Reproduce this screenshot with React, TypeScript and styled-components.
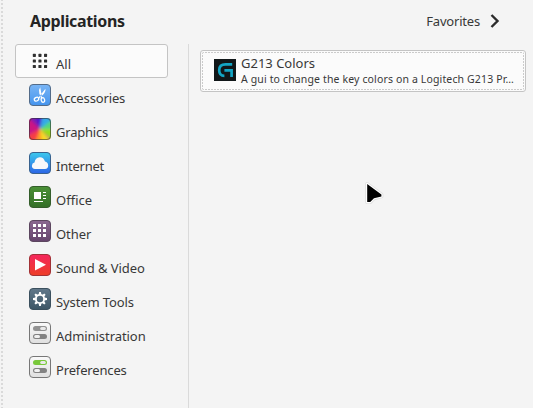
import React from "react";
import styled, { createGlobalStyle } from "styled-components";

const GlobalStyle = createGlobalStyle`
  * { box-sizing: border-box; }
  html, body { margin: 0; background: #f4f4f4; overflow: hidden; }
`;

const Menu = styled.main`
  position: relative;
  width: 533px;
  height: 408px;
  display: flex;
  overflow: hidden;
  background: #f4f4f4;
  color: #383838;
  font: 13px/18px "Noto Sans", "Open Sans", sans-serif;
`;

const ResizeEdge = styled.div`
  width: 2px;
  margin-left: 1px;
  background: repeating-linear-gradient(to bottom, #dadada 0 1px, transparent 1px 3px, #dadada 3px 4px);
`;

const Content = styled.div`
  flex: 1;
  display: flex;
  flex-direction: column;
`;

const Header = styled.header`
  display: flex;
  justify-content: space-between;
  height: 44px;
  padding: 11px 33px 0 27px;
`;

const Label = styled.span<{ $spacing?: number }>`
  display: block;
  white-space: nowrap;
  letter-spacing: ${(p) => p.$spacing ?? 0}px;
`;

const Title = styled(Label)`
  font-size: 16px;
  line-height: 20px;
  font-weight: 700;
  color: #242424;
`;

const Favorites = styled.div`
  display: flex;
  align-items: flex-start;
  gap: 10px;
  padding-top: 1px;
`;

const Columns = styled.div`
  display: flex;
  flex: 1;
`;

const Sidebar = styled.nav`
  width: 186px;
  padding-left: 12px;
  border-right: 1px solid #dadada;
`;

const Category = styled.div<{ $active?: boolean }>`
  display: flex;
  align-items: flex-start;
  width: 153px;
  height: 34px;
  gap: 5px;
  padding: 5px 0 0 13px;
  border: 1px solid ${(p) => (p.$active ? "#c4c4c4" : "transparent")};
  border-radius: 3px;
  background: ${(p) => (p.$active ? "#fbfbfb" : "transparent")};

  svg { flex: none; display: block; }
  ${Label} { margin-top: 5px; }
`;

const Results = styled.section`
  padding: 6px 0 0 11px;
`;

const ResultCard = styled.div`
  width: 326px;
  height: 42px;
  padding: 1px;
  border: 1px solid #c4c4c4;
  border-radius: 3px;
  background: #fbfbfb;
`;

const FocusRing = styled.div`
  display: flex;
  gap: 5px;
  height: 100%;
  padding: 7px 0 0 12px;
  border-radius: 2px;
  background:
    repeating-linear-gradient(to right, #cbcbcb 0 2px, transparent 2px 3px) top / 100% 1px no-repeat,
    repeating-linear-gradient(to right, #cbcbcb 0 2px, transparent 2px 3px) bottom / 100% 1px no-repeat,
    repeating-linear-gradient(to bottom, #cbcbcb 0 2px, transparent 2px 3px) left / 1px 100% no-repeat,
    repeating-linear-gradient(to bottom, #cbcbcb 0 2px, transparent 2px 3px) right / 1px 100% no-repeat;
`;

const ResultText = styled.div`
  margin-top: -4px;
`;

const AppName = styled(Label)`
  line-height: 17px;
`;

const Description = styled(Label)`
  font-size: 10.5px;
  line-height: 14px;
`;

const Pointer = styled.svg`
  position: absolute;
  left: 364px;
  top: 180px;
`;

type TileProps = { id: string; from: string; to: string; stroke: string; children?: React.ReactNode };

const Tile = ({ id, from, to, stroke, children }: TileProps) => (
  <svg width="22" height="22" viewBox="0 0 22 22">
    <defs>
      <linearGradient id={id} x1="0" y1="0" x2="0" y2="1">
        <stop stopColor={from} />
        <stop offset="1" stopColor={to} />
      </linearGradient>
    </defs>
    <rect x=".5" y=".5" width="21" height="21" rx="3.5" fill={`url(#${id})`} stroke={stroke} />
    {children}
  </svg>
);

const grid = [0, 1, 2].flatMap((y) => [0, 1, 2].map((x) => [x, y]));

const AllIcon = () => (
  <svg width="22" height="22" viewBox="0 0 22 22" fill="#303030">
    {grid.map(([x, y]) => (
      <rect key={`${x}${y}`} x={3.8 + x * 5.6} y={3.8 + y * 5.6} width="3.1" height="3.1" rx=".6" />
    ))}
  </svg>
);

const AccessoriesIcon = () => (
  <Tile id="accessories" from="#79b5f5" to="#4594ed" stroke="#536b88">
    <g fill="none" stroke="#fff" strokeWidth="1.2">
      <ellipse cx="7.5" cy="15.2" rx="2.3" ry="1.8" transform="rotate(-30 7.5 15.2)" />
      <ellipse cx="13.9" cy="16" rx="1.7" ry="2.3" transform="rotate(-18 13.9 16)" />
    </g>
    <path d="M9 14.2 16.4 4.8Q17 8.2 13.4 11.2L9.6 15ZM13.2 14 11.2 3.2Q9.2 5.8 10.3 9.6L12.2 14.3Z" fill="#fff" />
  </Tile>
);

const GraphicsIcon = () => (
  <svg width="22" height="22" viewBox="0 0 22 22">
    <defs>
      <clipPath id="graphics-clip"><rect width="22" height="22" rx="4" /></clipPath>
      <filter id="graphics-soft" x="-30%" y="-30%" width="160%" height="160%"><feGaussianBlur stdDeviation="1.6" /></filter>
    </defs>
    <g clipPath="url(#graphics-clip)">
      <rect width="22" height="22" fill="#c88787" />
      <g filter="url(#graphics-soft)">
        <path d="M11 11-6-4H7Z" fill="#7a1bb4" />
        <path d="M11 11 5-6H15Z" fill="#4a18d0" />
        <path d="M11 11 14-6H28V2Z" fill="#36a9e8" />
        <path d="M11 11 28-2V14Z" fill="#52d77c" />
        <path d="M11 11 28 11V26Z" fill="#97df18" />
        <path d="M11 11 26 28H12Z" fill="#f6df20" />
        <path d="M11 11 14 28H2Z" fill="#ff9d28" />
        <path d="M11 11 5 28H-6V17Z" fill="#f73c45" />
        <path d="M11 11-6 20V-6Z" fill="#cc1982" />
      </g>
    </g>
    <rect x=".5" y=".5" width="21" height="21" rx="3.5" fill="none" stroke="#333" strokeOpacity=".6" />
  </svg>
);

const InternetIcon = () => (
  <Tile id="internet" from="#3cc9ed" to="#2c65e6" stroke="#39628e">
    <path d="M6 17Q2.8 16.6 2.9 13.7 3 11 5.5 10.6 6.3 5.4 10.7 5.2 14.6 5 16 9.6 19.2 10.4 19.2 13.5 19.2 16.7 16 17Z" fill="#f8f8fa" />
  </Tile>
);

const OfficeIcon = () => (
  <Tile id="office" from="#4b9136" to="#336f27" stroke="#345d2b">
    <path d="M5 6h7v7H5zM5 15h9v1H5zM14 6h3v1h-3zM14 9h3v1h-3zM14 12h3v1h-3z" fill="#fff" />
  </Tile>
);

const OtherIcon = () => (
  <Tile id="other" from="#8b6991" to="#65446c" stroke="#5c465f">
    {grid.map(([x, y]) => (
      <rect key={`${x}${y}`} x={4 + x * 5} y={4 + y * 5} width="3" height="3" fill="#fff" />
    ))}
  </Tile>
);

const VideoIcon = () => (
  <Tile id="video" from="#f5265d" to="#ed3e27" stroke="#a13236">
    <path d="M6 5v11.5L17 10.8Z" fill="#fff" />
  </Tile>
);

const SystemIcon = () => (
  <Tile id="system" from="#61788a" to="#3d5666" stroke="#3b505e">
    <circle cx="11" cy="11" r="4.1" fill="none" stroke="#fff" strokeWidth="1.8" />
    {[0, 45, 90, 135, 180, 225, 270, 315].map((a) => (
      <path key={a} d="M10.1 4h1.8l.5 2.7H9.6Z" fill="#fff" transform={`rotate(${a} 11 11)`} />
    ))}
  </Tile>
);

const SwitchesIcon = ({ id, color }: { id: string; color: string }) => (
  <Tile id={id} from="#fafafa" to="#dfdfdf" stroke="#777">
    <rect x="4" y="4" width="14" height="5" rx="2.5" fill={color} />
    <rect x="11.2" y="5" width="5.6" height="3" rx="1.5" fill="#e9e9e9" />
    <rect x="4" y="12" width="14" height="5" rx="2.5" fill="#828282" />
    <rect x="5.2" y="13" width="5.8" height="3" rx="1.5" fill="#f0f0f0" />
  </Tile>
);

const GIcon = () => (
  <svg width="22" height="22" viewBox="0 0 22 22">
    <rect width="22" height="22" fill="#111719" />
    <path d="M18.2 5.4h-6.7Q5.2 5.4 5.2 11.2 5.2 16.8 10.4 16.8M10.4 11.3h7.2V18" fill="none" stroke="#13a5c4" strokeWidth="2.7" />
  </svg>
);

const categories = [
  { name: "All", spacing: 0, icon: <AllIcon /> },
  { name: "Accessories", spacing: -0.14, icon: <AccessoriesIcon /> },
  { name: "Graphics", spacing: -0.22, icon: <GraphicsIcon /> },
  { name: "Internet", spacing: -0.24, icon: <InternetIcon /> },
  { name: "Office", spacing: 0, icon: <OfficeIcon /> },
  { name: "Other", spacing: -0.06, icon: <OtherIcon /> },
  { name: "Sound & Video", spacing: -0.07, icon: <VideoIcon /> },
  { name: "System Tools", spacing: -0.1, icon: <SystemIcon /> },
  { name: "Administration", spacing: -0.06, icon: <SwitchesIcon id="administration" color="#929292" /> },
  { name: "Preferences", spacing: -0.16, icon: <SwitchesIcon id="preferences" color="#79c83a" /> },
];

export default function App() {
  return (
    <>
      <GlobalStyle />
      <Menu>
        <ResizeEdge />
        <Content>
          <Header>
            <Title $spacing={-0.35}>Applications</Title>
            <Favorites>
              <Label $spacing={-0.2}>Favorites</Label>
              <svg width="10" height="18" viewBox="0 0 10 18">
                <path d="m1.5 3 6 6-6 6" fill="none" stroke="#2b2b2b" strokeWidth="2.4" />
              </svg>
            </Favorites>
          </Header>
          <Columns>
            <Sidebar>
              {categories.map((c) => (
                <Category key={c.name} $active={c.name === "All"}>
                  {c.icon}
                  <Label $spacing={c.spacing}>{c.name}</Label>
                </Category>
              ))}
            </Sidebar>
            <Results>
              <ResultCard>
                <FocusRing>
                  <GIcon />
                  <ResultText>
                    <AppName>G213 Colors</AppName>
                    <Description $spacing={0.14}>A gui to change the key colors on a Logitech G213 Pr…</Description>
                  </ResultText>
                </FocusRing>
              </ResultCard>
            </Results>
          </Columns>
        </Content>
        <Pointer width="22" height="28" viewBox="0 0 22 28">
          <path d="M3.2 4V22H6.2L10 18.2 17.4 16.4V14.6Z" fill="#000" stroke="#ccc" strokeOpacity=".5" strokeWidth="4" strokeLinejoin="round" paintOrder="stroke" />
          <path d="M3.2 4V22H6.2L10 18.2 17.4 16.4V14.6Z" fill="#000" stroke="#fff" strokeWidth="2.4" strokeLinejoin="round" paintOrder="stroke" />
        </Pointer>
      </Menu>
    </>
  );
}
